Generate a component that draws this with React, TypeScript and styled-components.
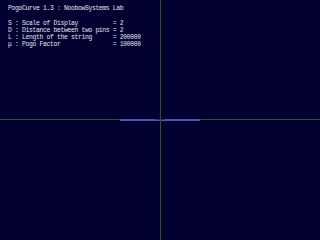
import styled, { createGlobalStyle } from 'styled-components';

const GlobalStyle = createGlobalStyle`
  html, body {
    margin: 0;
    padding: 0;
    background: #020030;
  }
`;

const params = [
  { key: 'S', label: 'Scale of Display', value: '2' },
  { key: 'D', label: 'Distance between two pins', value: '2' },
  { key: 'L', label: 'Length of the string', value: '200000' },
  { key: 'μ', label: 'Pogo Factor', value: '100000' },
];

const App = () => {
  return (
    <>
      <GlobalStyle />
      <Screen>
        <Plot width={320} height={240} viewBox="0 0 320 240">
          <rect x={0} y={119} width={320} height={1} fill="#1d5a24" />
          <rect x={160} y={0} width={1} height={240} fill="#1d5a24" />
          <rect x={120} y={119} width={80} height={2} fill="#5252b4" />
          <rect x={155} y={119} width={10} height={1} fill="#2e2e78" />
          <rect x={160} y={118} width={1} height={4} fill="#1d5a24" />
        </Plot>
        <Console>
          <Line>PogoCurve 1.3 : NoobowSystems Lab</Line>
          <Line> </Line>
          {params.map((p) => (
            <Line key={p.key}>
              {`${p.key} : ${p.label}`.padEnd(30, ' ')}= {p.value}
            </Line>
          ))}
        </Console>
      </Screen>
    </>
  );
};

const Screen = styled.div`
  position: relative;
  width: 320px;
  height: 240px;
  overflow: hidden;
  background: #020030;
`;

const Plot = styled.svg`
  position: absolute;
  inset: 0;
  display: block;
`;

const Console = styled.div`
  position: relative;
  display: flex;
  flex-direction: column;
  padding: 5px 0 0 8px;
  font-family: 'Liberation Mono', 'DejaVu Sans Mono', monospace;
  font-size: 6.4px;
  letter-spacing: -0.34px;
  color: #e4e4ee;
`;

const Line = styled.div`
  height: 7.3px;
  line-height: 7.3px;
  white-space: pre;
`;

export default App;
